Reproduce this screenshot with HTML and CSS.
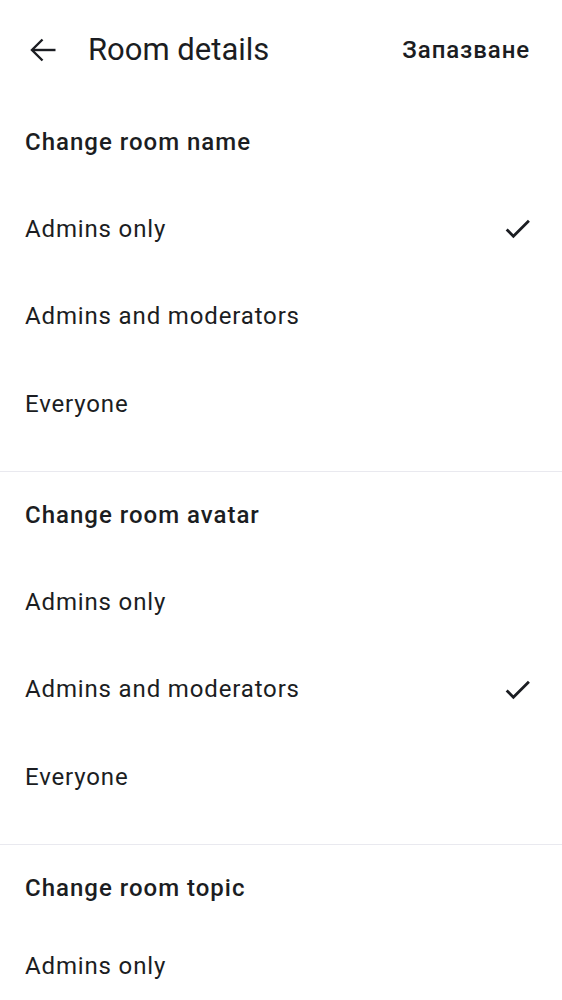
FILE: index.html
```html
<!DOCTYPE html>
<html lang="en">
<head>
<meta charset="utf-8">
<title>Room details</title>
<link rel="stylesheet" href="styles.css">
</head>
<body>
<header class="topbar">
  <button class="back" aria-label="Back">
    <svg width="26" height="24" viewBox="0 0 26 24" fill="none" stroke="#1b1d22" stroke-width="2.4">
      <path d="M2.5 12H25.5"/>
      <path d="M12.5 1.5L2 12L12.5 22.5" stroke-linejoin="miter"/>
    </svg>
  </button>
  <h1 class="title">Room details</h1>
  <span class="save">Запазване</span>
</header>

<section class="group">
  <h2 class="group-title">Change room name</h2>
  <div class="option"><span>Admins only</span><svg class="check" viewBox="0 0 24 24"><path d="M9 16.17L4.83 12l-1.42 1.41L9 19 21 7l-1.41-1.41z"/></svg></div>
  <div class="option"><span>Admins and moderators</span></div>
  <div class="option"><span>Everyone</span></div>
</section>

<section class="group">
  <h2 class="group-title">Change room avatar</h2>
  <div class="option"><span>Admins only</span></div>
  <div class="option"><span>Admins and moderators</span><svg class="check" viewBox="0 0 24 24"><path d="M9 16.17L4.83 12l-1.42 1.41L9 19 21 7l-1.41-1.41z"/></svg></div>
  <div class="option"><span>Everyone</span></div>
</section>

<section class="group last">
  <h2 class="group-title">Change room topic</h2>
  <div class="option"><span>Admins only</span></div>
</section>
</body>
</html>
```
FILE: styles.css
```css
* { box-sizing: border-box; }
html, body { margin: 0; padding: 0; background: #ffffff; }
body {
  font-family: Roboto, "Noto Sans", "Liberation Sans", sans-serif;
  color: #1b1d22;
  height: 1000px;
  overflow: hidden;
  display: flex;
  flex-direction: column;
}
.topbar {
  height: 99px;
  flex: none;
  display: flex;
  align-items: center;
  padding: 0 33px 0 30px;
}
.back {
  border: 0;
  background: none;
  padding: 0;
  margin: 1px 32px 0 0;
  width: 26px;
  height: 24px;
  display: flex;
  align-items: center;
}
.title {
  margin: 0;
  font-size: 31px;
  font-weight: 400;
  flex: 1;
}
.save {
  font-size: 24px;
  font-weight: 500;
  letter-spacing: 0.9px;
  margin-right: -1px;
}
.group {
  flex: none;
  padding-bottom: 23.5px;
  border-bottom: 1px solid #e9e9ef;
}
.group.last {
  flex: 1;
  display: flex;
  flex-direction: column;
  padding-bottom: 0;
  border-bottom: 0;
}
.group-title {
  margin: 0;
  height: 86px;
  display: flex;
  align-items: center;
  padding: 0 25px;
  font-size: 24px;
  font-weight: 500;
  letter-spacing: 1px;
}
.option {
  height: 87.5px;
  display: flex;
  align-items: center;
  justify-content: space-between;
  padding: 0 28px 0 25px;
  font-size: 24px;
  letter-spacing: 0.85px;
}
.group.last .option {
  flex: 1;
  height: auto;
}
.check {
  width: 33px;
  height: 33px;
  fill: #1b1d22;
}
```
